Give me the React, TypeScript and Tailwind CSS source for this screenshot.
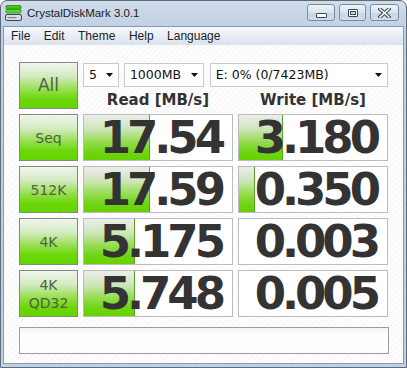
import React, { FC } from "react";

interface IScore {
    value: string
    bar: number
}

interface IRow {
    label: string[]
    read: IScore
    write: IScore
}

const rows: IRow[] = [
    { label: ["Seq"], read: { value: "17.54", bar: 66 }, write: { value: "3.180", bar: 44 } },
    { label: ["512K"], read: { value: "17.59", bar: 66 }, write: { value: "0.350", bar: 16 } },
    { label: ["4K"], read: { value: "5.175", bar: 51 }, write: { value: "0.003", bar: 0 } },
    { label: ["4K", "QD32"], read: { value: "5.748", bar: 51 }, write: { value: "0.005", bar: 0 } },
];

const greenBtn =
    "border border-[#7f8e79] bg-[linear-gradient(to_bottom,#f1f4ef_0%,#d3ebc0_30%,#98df52_58%,#6cd60a_80%,#64d400_100%)] flex flex-col items-center justify-center text-[#4f6147] font-['DejaVu_Sans',sans-serif]";

const AppIcon: FC = () => (
    <svg width="17" height="17" viewBox="0 0 17 17">
        <rect x="1" y="0.5" width="15" height="3.5" rx="1" fill="#3fc21c" stroke="#2a8a14" strokeWidth="0.8" />
        <rect x="1" y="4.5" width="15" height="3.5" rx="1" fill="#5ad63a" stroke="#2a8a14" strokeWidth="0.8" />
        <rect x="0.5" y="9.5" width="16" height="6" rx="1.5" fill="#d9dde2" stroke="#3c444c" strokeWidth="1" />
        <rect x="2.5" y="12" width="9" height="1.2" fill="#7b848e" />
    </svg>
);

const CaptionButton: FC<{ kind: "min" | "max" | "close", w: string }> = ({ kind, w }) => (
    <div className={`${w} h-[17px] rounded-[3px] border border-[#7a8aa0] bg-[linear-gradient(to_bottom,#eef3f8_0%,#dbe4ef_50%,#c9d5e3_51%,#d3dde9_100%)] flex items-center justify-center`}>
        {kind === "min" && (
            <div className="w-[11px] h-[5px] mt-[5px] border border-[#3c4656] bg-white rounded-[1px]" />
        )}
        {kind === "max" && (
            <div className="w-[10px] h-[8px] border border-[#3c4656] bg-white rounded-[1px] flex items-center justify-center">
                <div className="w-[6px] h-[4px] border border-[#3c4656] bg-[#c9d5e3]" />
            </div>
        )}
        {kind === "close" && (
            <svg width="13" height="10" viewBox="0 0 13 10">
                <path d="M2 1 L11 9 M11 1 L2 9" stroke="#3c4656" strokeWidth="3.6" strokeLinecap="square" />
                <path d="M2 1 L11 9 M11 1 L2 9" stroke="#ffffff" strokeWidth="1.6" strokeLinecap="square" />
            </svg>
        )}
    </div>
);

const Select: FC<{ text: string, w: string }> = ({ text, w }) => (
    <div className={`${w} h-[24px] bg-white border border-[#c9c9c9] flex items-center pl-[5px] pr-[5px] text-[12.5px] text-[#111] font-['DejaVu_Sans',sans-serif]`}>
        <span className="flex-1 whitespace-nowrap">{text}</span>
        <svg width="7" height="4" viewBox="0 0 7 4">
            <path d="M0 0 L7 0 L3.5 4 Z" fill="#111" />
        </svg>
    </div>
);

const ScoreBox: FC<{ score: IScore }> = ({ score }) => (
    <div className="relative h-[47px] bg-white border border-[#bcbcbc] flex items-center justify-end pr-[10px]">
        {score.bar > 0 && (
            <div
                className="absolute left-0 top-0 bottom-0 border-r border-[#5c9e2c] bg-[linear-gradient(to_bottom,#eceeea_0%,#cfe6bd_30%,#95dc50_60%,#6fd414_82%,#66d200_100%)]"
                style={{ width: score.bar }}
            />
        )}
        <span className="relative text-[45px] leading-[44px] font-bold tracking-[-4px] text-[#333333] font-['DejaVu_Sans',sans-serif]">
            {score.value}
        </span>
    </div>
);

const App: FC = () => {
    return (
        <div className="w-[407px] h-[368px] bg-[linear-gradient(to_bottom,#d0dcea_0px,#c1d0e3_26px,#c1d0e3_100%)] border border-[#5d6b7d] rounded-t-[7px] flex flex-col overflow-hidden">
            <div className="h-[25px] flex items-center pl-[4px] pr-[7px]">
                <AppIcon />
                <span className="ml-[5px] text-[11.5px] text-[#1b1b1b] font-['Liberation_Sans',sans-serif]">CrystalDiskMark 3.0.1</span>
                <div className="flex-1" />
                <div className="flex items-center gap-[4px] -mt-[2px]">
                    <CaptionButton kind="min" w="w-[28px]" />
                    <CaptionButton kind="max" w="w-[27px]" />
                    <CaptionButton kind="close" w="w-[29px]" />
                </div>
            </div>
            <div className="mx-[2px] flex-1 flex flex-col border border-[#8a9aae]">
                <div className="h-[18px] flex items-center gap-[13.5px] pl-[7px] bg-[linear-gradient(to_bottom,#f4f7fb_0%,#e9eef5_50%,#dbe3ee_100%)] text-[12px] text-[#222] font-['Liberation_Sans',sans-serif]">
                    <span>File</span>
                    <span>Edit</span>
                    <span>Theme</span>
                    <span>Help</span>
                    <span>Language</span>
                </div>
                <div className="flex-1 pt-[17px] pl-[15px] bg-[repeating-linear-gradient(135deg,#fdfdfd_0px,#fdfdfd_3px,#f6f6f6_3px,#f6f6f6_4px)]">
                    <div className="grid grid-cols-[59px_150px_150px] gap-x-[5px] gap-y-[5px]">
                        <div className={`${greenBtn} h-[47px]`}>
                            <span className="text-[17px]">All</span>
                        </div>
                        <div className="col-span-2 flex flex-col">
                            <div className="flex gap-[5px] mt-[1px]">
                                <Select text="5" w="w-[36px]" />
                                <Select text="1000MB" w="w-[80px]" />
                                <Select text="E: 0% (0/7423MB)" w="w-[179px] ml-[1px]" />
                            </div>
                            <div className="grid grid-cols-[150px_150px] gap-x-[5px] mt-[4px] leading-[18px] text-[15px] font-bold text-[#333333] font-['DejaVu_Sans',sans-serif]">
                                <span className="text-center">Read [MB/s]</span>
                                <span className="text-center">Write [MB/s]</span>
                            </div>
                        </div>
                        {rows.map((row, index) => (
                            <React.Fragment key={index}>
                                <div className={`${greenBtn} h-[47px] text-[14px] leading-[18px]`}>
                                    {row.label.map((line) => (
                                        <span key={line}>{line}</span>
                                    ))}
                                </div>
                                <ScoreBox score={row.read} />
                                <ScoreBox score={row.write} />
                            </React.Fragment>
                        ))}
                    </div>
                    <div className="mt-[10px] w-[370px] h-[27px] border border-[#9c9c9c] bg-[linear-gradient(to_bottom,#f4f4f4_0%,#ffffff_30%,#fcfcfc_100%)]" />
                </div>
            </div>
            <div className="h-[3px]" />
        </div>
    );
}

export default App;
